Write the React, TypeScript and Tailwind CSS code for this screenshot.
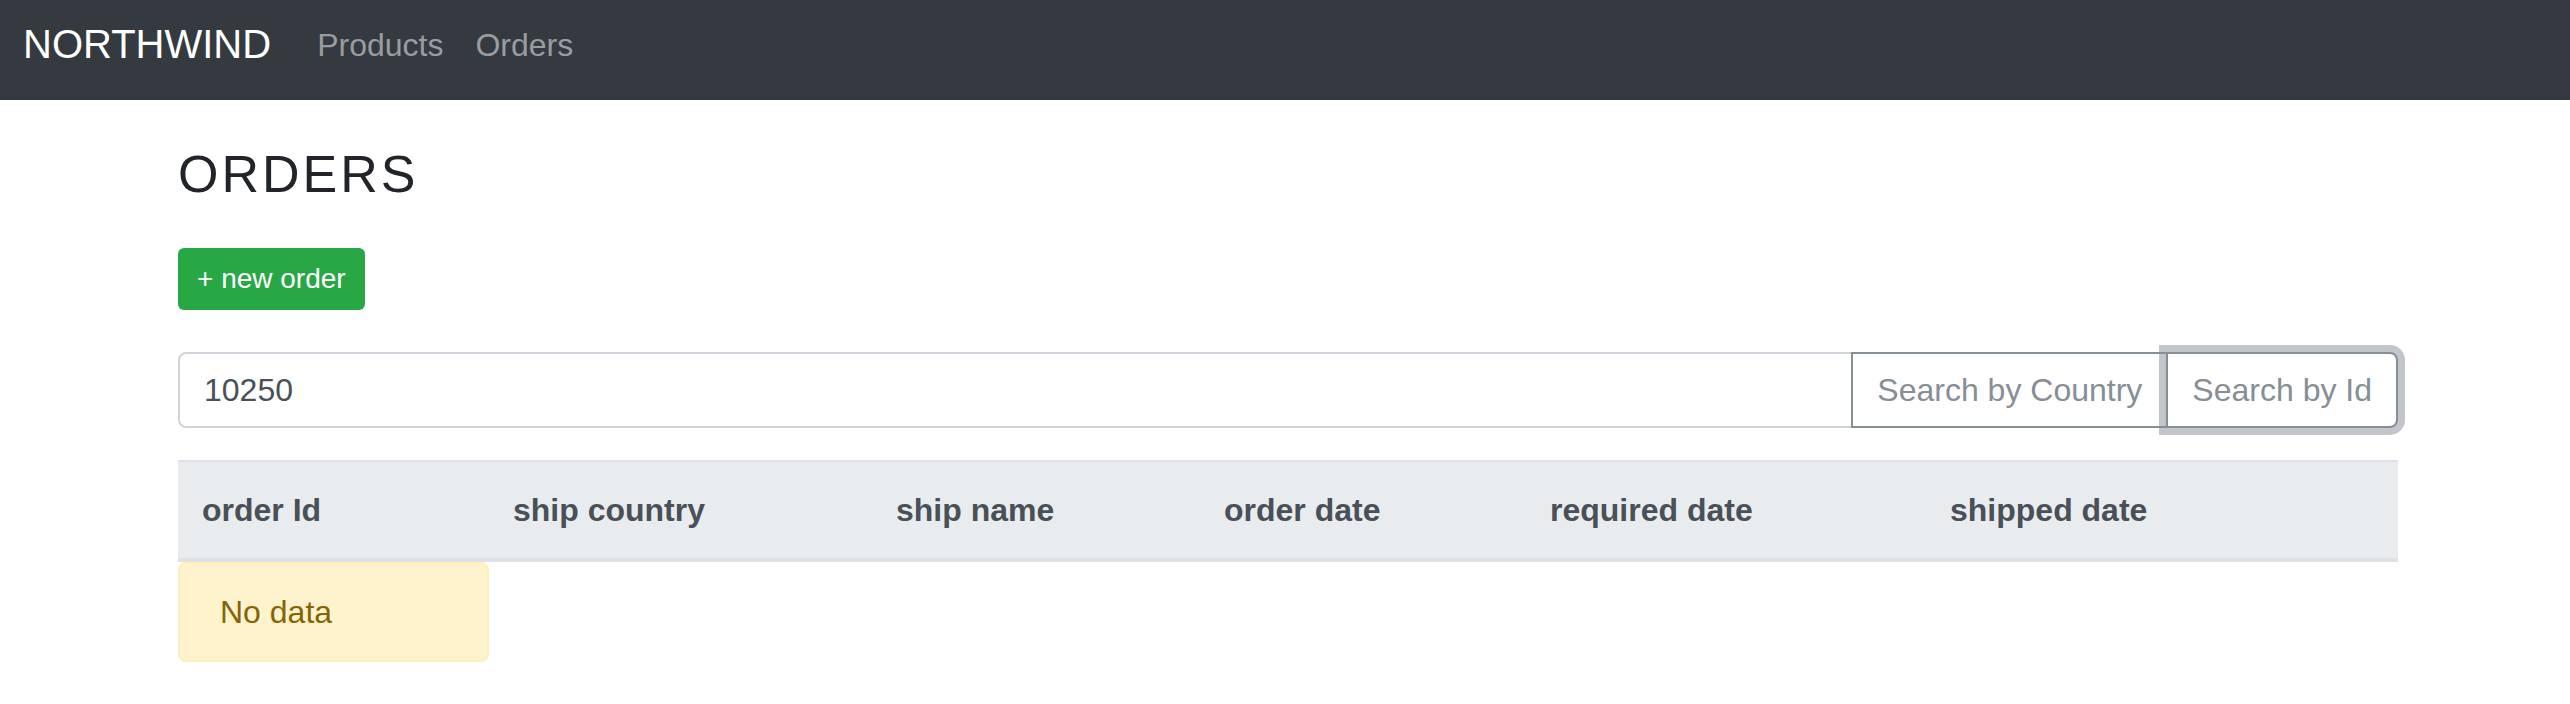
import React from "react";

const cols = [
  { label: "order Id", w: "w-[311px]" },
  { label: "ship country", w: "w-[383px]" },
  { label: "ship name", w: "w-[328px]" },
  { label: "order date", w: "w-[326px]" },
  { label: "required date", w: "w-[400px]" },
  { label: "shipped date", w: "w-[472px]" },
];

export default function App() {
  return (
    <div className="min-h-[704px] bg-white font-['Liberation_Sans',Arial,sans-serif]">
      <nav className="h-[100px] bg-[#343a40] flex items-start pl-[23px]">
        <span className="mt-[14px] text-[40px] leading-[60px] text-white">NORTHWIND</span>
        <div className="flex ml-[30px]">
          <a className="mt-[21px] px-[16px] text-[32px] leading-[48px] text-[#9a9da0]">Products</a>
          <a className="mt-[21px] px-[16px] text-[32px] leading-[48px] text-[#9a9da0]">Orders</a>
        </div>
      </nav>

      <main className="ml-[178px] w-[2220px]">
        <h2 className="mt-[43px] text-[52px] leading-[62px] tracking-[3px] text-[#212529]">ORDERS</h2>

        <button className="mt-[43px] h-[62px] px-[19px] rounded-[6px] bg-[#28a745] text-white text-[28px] leading-[42px] whitespace-nowrap">
          + new order
        </button>

        <div className="mt-[42px] flex h-[76px]">
          <div className="flex-1 flex items-center border-2 border-[#ced4da] rounded-l-[8px] px-[24px] text-[32px] text-[#495057]">
            10250
          </div>
          <button className="-ml-[2px] border-2 border-[#868e96] px-[24px] text-[32px] text-[#868e96] bg-white whitespace-nowrap">
            Search by Country
          </button>
          <button className="relative z-10 -ml-[2px] border-2 border-[#868e96] rounded-r-[8px] px-[24px] text-[32px] text-[#868e96] bg-white whitespace-nowrap shadow-[0_0_0_7px_rgba(134,142,150,0.5)]">
            Search by Id
          </button>
        </div>

        <div className="mt-[32px] flex border-t-2 border-b-4 border-[#dee2e6] bg-[#e9ecef]">
          {cols.map((c) => (
            <div key={c.label} className={`${c.w} px-[24px] py-[24px] text-[32px] leading-[48px] font-bold text-[#495057] whitespace-nowrap`}>
              {c.label}
            </div>
          ))}
        </div>

        <div className="w-[311px] h-[100px] border-2 border-[#ffeeba] bg-[#fff3cd] rounded-[8px] px-[40px] py-[24px] text-[32px] leading-[48px] text-[#856404]">
          No data
        </div>
      </main>
    </div>
  );
}
